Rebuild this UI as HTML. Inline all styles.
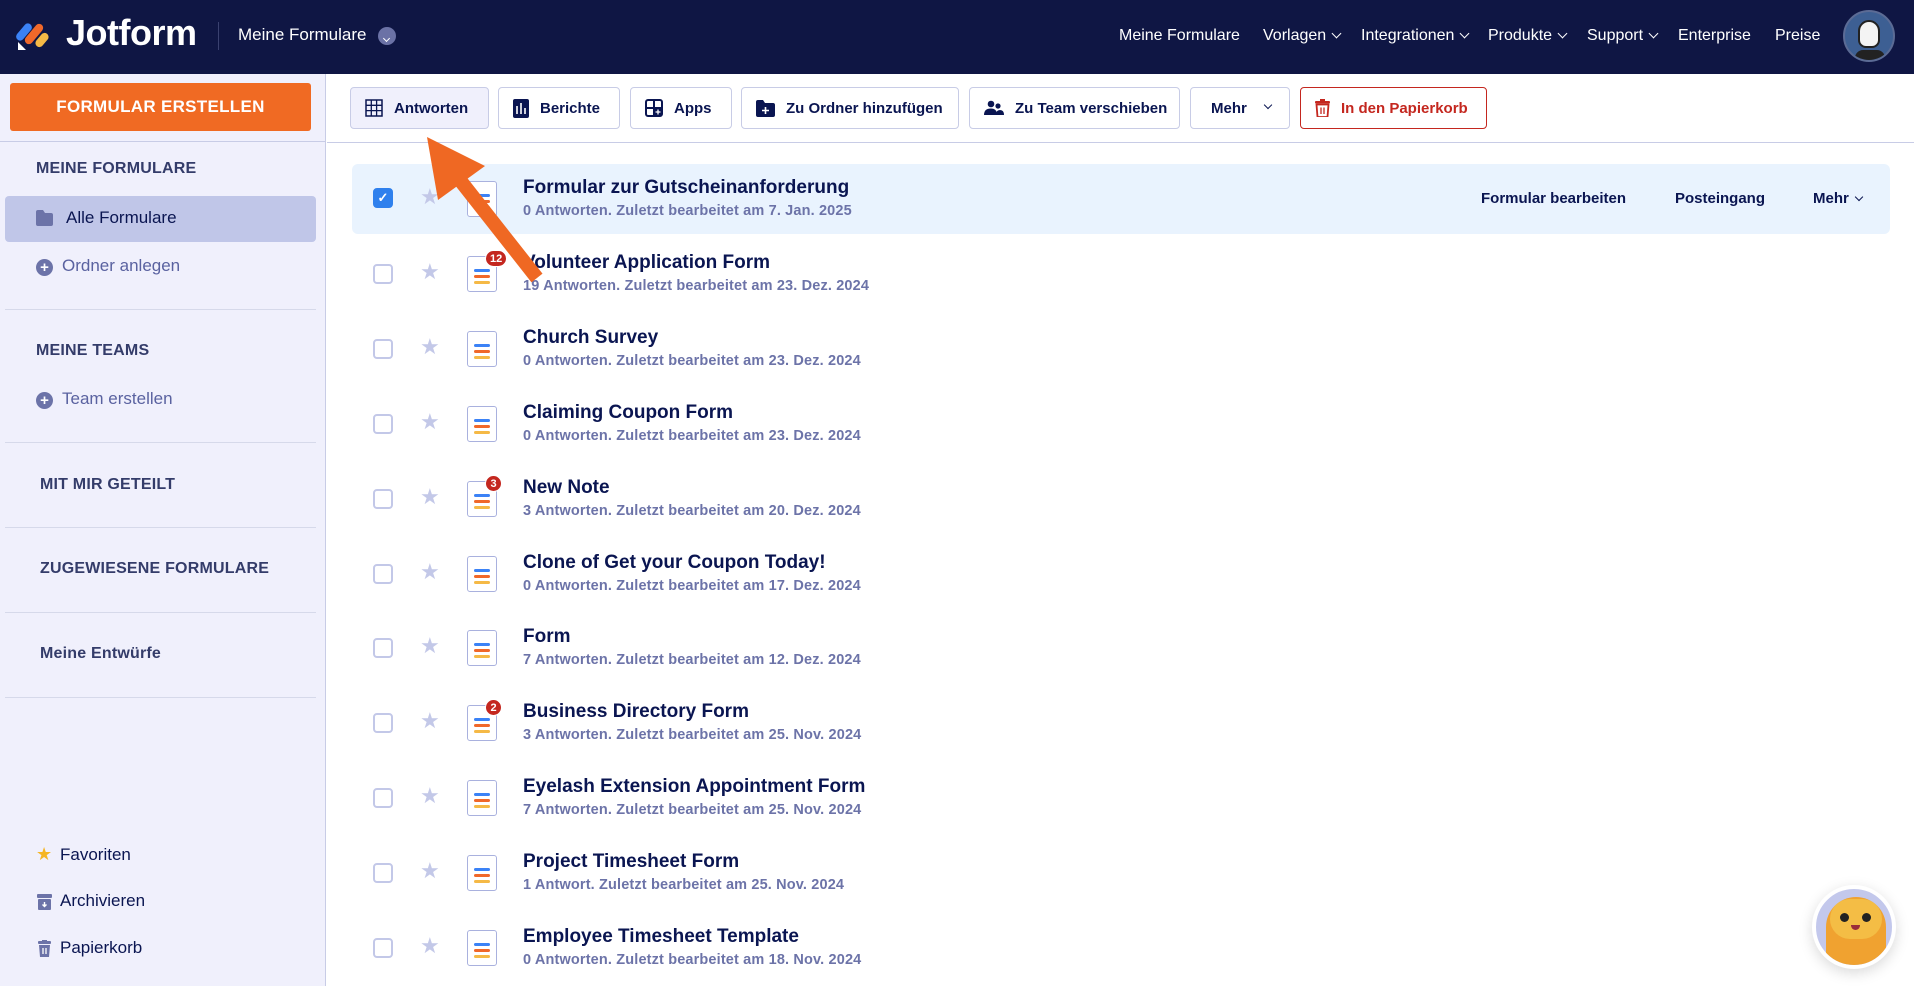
<!DOCTYPE html>
<html><head><meta charset="utf-8"><style>
*{box-sizing:border-box;margin:0;padding:0}
body{width:1914px;height:986px;overflow:hidden;font-family:"Liberation Sans",sans-serif;background:#fff;position:relative;color:#0a1551}
.nav{position:absolute;left:0;top:0;width:1914px;height:74px;background:#0f1644}
.nav .t{position:absolute;top:27px;color:#fff;font-size:16px}
.ch{display:inline-block;width:7px;height:7px;border-right:1.8px solid #fff;border-bottom:1.8px solid #fff;transform:rotate(45deg);margin-left:7px;position:relative;top:-3px}
.side{position:absolute;left:0;top:74px;width:326px;height:912px;background:#f0f0fc;border-right:1px solid #c8cce6}
.abs{position:absolute}
.sh{position:absolute;left:36px;font-size:16px;font-weight:bold;color:#343c6a;letter-spacing:.2px}
.div{position:absolute;left:5px;width:311px;height:1px;background:#d6d9ea}
.si{position:absolute;font-size:17px;color:#0a1551}
.btn{position:absolute;top:87px;height:42px;border:1px solid #c8cce6;border-radius:4px;background:#fff;font-size:15px;font-weight:bold;color:#0a1551;display:flex;align-items:center;padding-left:14px;gap:11px}
.row{position:absolute;left:352px;width:1538px;height:70px}
.cb{position:absolute;left:373px;width:20px;height:20px;border:2px solid #c3c8e8;border-radius:4px;background:#fff}
.st{position:absolute;left:420px;font-size:22px;color:#c3c8e8}
.fi{position:absolute;left:467px;width:30px;height:36px;border:1.5px solid #a9b1de;border-radius:3px;background:#fff}
.fi i{position:absolute;left:6px;width:16px;height:3px;border-radius:2px}
.bd{position:absolute;left:485px;height:17px;min-width:17px;padding:0 4px;border-radius:9px;background:#c4271f;color:#fff;font-size:11px;font-weight:bold;text-align:center;line-height:17px;border:1.5px solid #fff}
.ti{position:absolute;left:523px;font-size:19px;font-weight:bold;color:#0a1551}
.su{position:absolute;left:523px;font-size:14.5px;font-weight:bold;color:#6c73a8;letter-spacing:.15px}
</style></head><body>
<div class="nav">
 <svg class="abs" style="left:16px;top:16px" width="34" height="36" viewBox="0 0 34 36">
  <rect x="4" y="6" width="8" height="20" rx="4" transform="rotate(40 8 16)" fill="#3b82f6"/>
  <rect x="14" y="6" width="8" height="24" rx="4" transform="rotate(40 18 18)" fill="#f0682a"/>
  <rect x="22" y="16" width="8" height="16" rx="4" transform="rotate(40 26 24)" fill="#f5b946"/>
  <path d="M2 26 L2 34 L10 34 Z" fill="#fff"/>
 </svg>
 <div class="abs" style="left:66px;top:12px;color:#fff;font-size:36px;font-weight:bold;letter-spacing:-.5px">Jotform</div>
 <div class="abs" style="left:218px;top:22px;width:1px;height:28px;background:#3a4170"></div>
 <div class="abs" style="left:238px;top:25px;color:#fff;font-size:17px">Meine Formulare</div>
 <div class="abs" style="left:378px;top:27px;width:18px;height:18px;border-radius:9px;background:#6b72a6"><span class="ch" style="width:5px;height:5px;border-width:1.5px;margin-left:5.5px;top:1px"></span></div>
 <div class="t" style="left:1119px">Meine Formulare</div>
 <div class="t" style="left:1263px">Vorlagen<span class="ch"></span></div>
 <div class="t" style="left:1361px">Integrationen<span class="ch"></span></div>
 <div class="t" style="left:1488px">Produkte<span class="ch"></span></div>
 <div class="t" style="left:1587px">Support<span class="ch"></span></div>
 <div class="t" style="left:1678px">Enterprise</div>
 <div class="t" style="left:1775px">Preise</div>
 <div class="abs" style="left:1843px;top:10px;width:52px;height:52px;border-radius:26px;background:#3d5f93;border:2px solid #5b6b95;overflow:hidden">
  <div class="abs" style="left:13px;top:8px;width:22px;height:28px;border-radius:11px 11px 8px 8px;background:#f4f4f4;border:2px solid #222"></div>
  <div class="abs" style="left:10px;top:38px;width:30px;height:14px;background:#222;border-radius:8px 8px 0 0"></div>
 </div>
</div>
<div class="side">
 <div class="abs" style="left:10px;top:9px;width:301px;height:48px;background:#f06a23;border-radius:3px;color:#fff;font-size:17px;font-weight:bold;text-align:center;line-height:48px;letter-spacing:.3px">FORMULAR ERSTELLEN</div>
 <div class="abs" style="left:0;top:67px;width:326px;height:1px;background:#c8cce6"></div>
</div>
<div class="sh" style="top:160px">MEINE FORMULARE</div>
<div class="abs" style="left:5px;top:196px;width:311px;height:46px;background:#c0c6e8;border-radius:4px"></div>
<svg class="abs" style="left:36px;top:210px" width="17" height="16"><path d="M0 2 Q0 0 2 0 H7 L9 3 H15 Q17 3 17 5 V14 Q17 16 15 16 H2 Q0 16 0 14Z" fill="#6c73a8"/></svg>
<div class="si" style="left:66px;top:208px">Alle Formulare</div>
<div class="abs" style="left:36px;top:259px;width:17px;height:17px;border-radius:9px;background:#6c73a8;color:#fff;font-size:15px;line-height:17px;text-align:center;font-weight:bold">+</div>
<div class="si" style="left:62px;top:256px;color:#5a62a0">Ordner anlegen</div>
<div class="div" style="top:309px"></div>
<div class="sh" style="top:342px">MEINE TEAMS</div>
<div class="abs" style="left:36px;top:392px;width:17px;height:17px;border-radius:9px;background:#6c73a8;color:#fff;font-size:15px;line-height:17px;text-align:center;font-weight:bold">+</div>
<div class="si" style="left:62px;top:389px;color:#5a62a0">Team erstellen</div>
<div class="div" style="top:442px"></div>
<div class="sh" style="top:476px;left:40px">MIT MIR GETEILT</div>
<div class="div" style="top:527px"></div>
<div class="sh" style="top:560px;left:40px">ZUGEWIESENE FORMULARE</div>
<div class="div" style="top:612px"></div>
<div class="sh" style="top:645px;left:40px;font-size:16px">Meine Entwürfe</div>
<div class="div" style="top:697px"></div>
<div class="abs" style="left:36px;top:844px;color:#f5b523;font-size:18px">&#9733;</div>
<div class="si" style="left:60px;top:845px">Favoriten</div>
<svg class="abs" style="left:37px;top:894px" width="15" height="16"><rect x="0" y="0" width="15" height="4" rx="1" fill="#6c73a8"/><rect x="1" y="5" width="13" height="11" rx="1" fill="#6c73a8"/><path d="M7.5 8 V12 M5.5 10.5 L7.5 12.5 L9.5 10.5" stroke="#fff" stroke-width="1.4" fill="none"/></svg>
<div class="si" style="left:60px;top:891px">Archivieren</div>
<svg class="abs" style="left:38px;top:940px" width="13" height="17"><rect x="0" y="1" width="13" height="3" rx="1" fill="#6c73a8"/><rect x="4" y="0" width="5" height="2" fill="#6c73a8"/><path d="M1 5 H12 L11 17 H2Z" fill="#6c73a8"/><path d="M5 8 V14 M8 8 V14" stroke="#fff" stroke-width="1.3"/></svg>
<div class="si" style="left:60px;top:938px">Papierkorb</div>

<div class="abs" style="left:327px;top:142px;width:1587px;height:1px;background:#c8cce6"></div>
<div class="btn" style="left:350px;width:139px;background:#f0f0fc">
 <svg width="18" height="18"><rect x="1" y="1" width="16" height="16" fill="none" stroke="#0a1551" stroke-width="1.5"/><path d="M1 6.3H17M1 11.6H17M6.3 1V17M11.6 1V17" stroke="#0a1551" stroke-width="1.3"/></svg>Antworten</div>
<div class="btn" style="left:498px;width:122px"><svg width="16" height="19"><rect width="16" height="19" rx="2" fill="#0a1551"/><path d="M4 7V15M8 4V15M12 9V15" stroke="#fff" stroke-width="1.6"/></svg>Berichte</div>
<div class="btn" style="left:630px;width:102px"><svg width="18" height="18"><rect x="1" y="1" width="16" height="16" rx="2" fill="none" stroke="#0a1551" stroke-width="2"/><path d="M9 1V17M1 9H17" stroke="#0a1551" stroke-width="2"/><rect x="9" y="9" width="8" height="8" fill="#0a1551"/><path d="M13 10.5V15.5M10.5 13H15.5" stroke="#fff" stroke-width="1.3"/></svg>Apps</div>
<div class="btn" style="left:741px;width:218px"><svg width="19" height="17"><path d="M0 2Q0 0 2 0H7L9 3H17Q19 3 19 5V15Q19 17 17 17H2Q0 17 0 15Z" fill="#0a1551"/><path d="M9.5 7V14M6 10.5H13" stroke="#fff" stroke-width="1.6"/></svg>Zu Ordner hinzufügen</div>
<div class="btn" style="left:969px;width:211px"><svg width="20" height="16"><circle cx="7" cy="4" r="3.3" fill="#0a1551"/><circle cx="14" cy="6" r="2.6" fill="#0a1551"/><path d="M0 15Q0 8.5 7 8.5Q12 8.5 13 13V15Z" fill="#0a1551"/><path d="M12 15Q12 10 16 10Q20 10 20 15Z" fill="#0a1551"/></svg>Zu Team verschieben</div>
<div class="btn" style="left:1190px;width:100px;padding-left:20px;gap:18px">Mehr <span class="ch" style="border-color:#0a1551;width:6px;height:6px;border-width:1.5px;margin-left:0"></span></div>
<div class="btn" style="left:1300px;width:187px;border-color:#c4271f;color:#c4271f"><svg width="15" height="18"><rect x="0" y="2" width="15" height="2.5" rx="1" fill="#c4271f"/><rect x="5" y="0" width="5" height="2" fill="#c4271f"/><path d="M1.5 5.5H13.5L12.5 18H2.5Z" fill="none" stroke="#c4271f" stroke-width="1.8"/><path d="M6 8.5V15M9 8.5V15" stroke="#c4271f" stroke-width="1.3"/></svg>In den Papierkorb</div>

<div class="row" style="top:164px;background:#e9f3fe;border-radius:6px"></div>
<div class="abs" style="left:1481px;top:190px;font-size:15px;font-weight:bold">Formular bearbeiten</div>
<div class="abs" style="left:1675px;top:190px;font-size:15px;font-weight:bold">Posteingang</div>
<div class="abs" style="left:1813px;top:190px;font-size:15px;font-weight:bold">Mehr<span class="ch" style="border-color:#0a1551;width:6px;height:6px;border-width:1.3px"></span></div>

<div id="rows"></div>
<script>
var d=[["Formular zur Gutscheinanforderung","0 Antworten. Zuletzt bearbeitet am 7. Jan. 2025",""],
["Volunteer Application Form","19 Antworten. Zuletzt bearbeitet am 23. Dez. 2024","12"],
["Church Survey","0 Antworten. Zuletzt bearbeitet am 23. Dez. 2024",""],
["Claiming Coupon Form","0 Antworten. Zuletzt bearbeitet am 23. Dez. 2024",""],
["New Note","3 Antworten. Zuletzt bearbeitet am 20. Dez. 2024","3"],
["Clone of Get your Coupon Today!","0 Antworten. Zuletzt bearbeitet am 17. Dez. 2024",""],
["Form","7 Antworten. Zuletzt bearbeitet am 12. Dez. 2024",""],
["Business Directory Form","3 Antworten. Zuletzt bearbeitet am 25. Nov. 2024","2"],
["Eyelash Extension Appointment Form","7 Antworten. Zuletzt bearbeitet am 25. Nov. 2024",""],
["Project Timesheet Form","1 Antwort. Zuletzt bearbeitet am 25. Nov. 2024",""],
["Employee Timesheet Template","0 Antworten. Zuletzt bearbeitet am 18. Nov. 2024",""]];
var h="";
for(var i=0;i<d.length;i++){var y=164+i*74.9;
var cb=i==0?'<div class="cb" style="top:'+(y+24)+'px;background:#2f80ed;border-color:#2f80ed;color:#fff;font-size:13px;line-height:16px;text-align:center;font-weight:bold">&#10003;</div>':'<div class="cb" style="top:'+(y+25)+'px"></div>';
h+=cb+'<div class="st" style="top:'+(y+20)+'px">&#9733;</div>'
+'<div class="fi" style="top:'+(y+17)+'px"><i style="top:12px;background:#3b82f6"></i><i style="top:18px;background:#f0682a"></i><i style="top:24px;background:#f5b946"></i></div>'
+(d[i][2]?'<div class="bd" style="top:'+(y+11)+'px">'+d[i][2]+'</div>':'')
+'<div class="ti" style="top:'+(y+13)+'px">'+d[i][0]+'</div><div class="su" style="top:'+(y+39)+'px">'+d[i][1]+'</div>';}
document.getElementById("rows").innerHTML=h;
</script>
<svg class="abs" style="left:0;top:0" width="1914" height="986" viewBox="0 0 1914 986">
 <line x1="537" y1="278" x2="452" y2="170" stroke="#ef6823" stroke-width="14" stroke-linecap="butt"/>
 <path d="M427 137 L485 166 L438 200 Z" fill="#ef6823"/>
</svg>
<div class="abs" style="left:1812px;top:885px;width:84px;height:84px;border-radius:42px;background:#c3c8ec;border:4px solid #fff;box-shadow:0 4px 14px rgba(0,0,0,.15);overflow:hidden">
 <div class="abs" style="left:10px;top:8px;width:60px;height:72px;border-radius:30px 30px 6px 6px;background:#f0a230"></div>
 <div class="abs" style="left:14px;top:10px;width:52px;height:40px;border-radius:26px;background:#f4bd45"></div>
 <div class="abs" style="left:24px;top:24px;width:9px;height:9px;border-radius:5px;background:#222"></div>
 <div class="abs" style="left:46px;top:24px;width:9px;height:9px;border-radius:5px;background:#222"></div>
 <div class="abs" style="left:35px;top:36px;width:9px;height:5px;border-radius:0 0 5px 5px;background:#9b2d3a"></div>
</div>
</body></html>
